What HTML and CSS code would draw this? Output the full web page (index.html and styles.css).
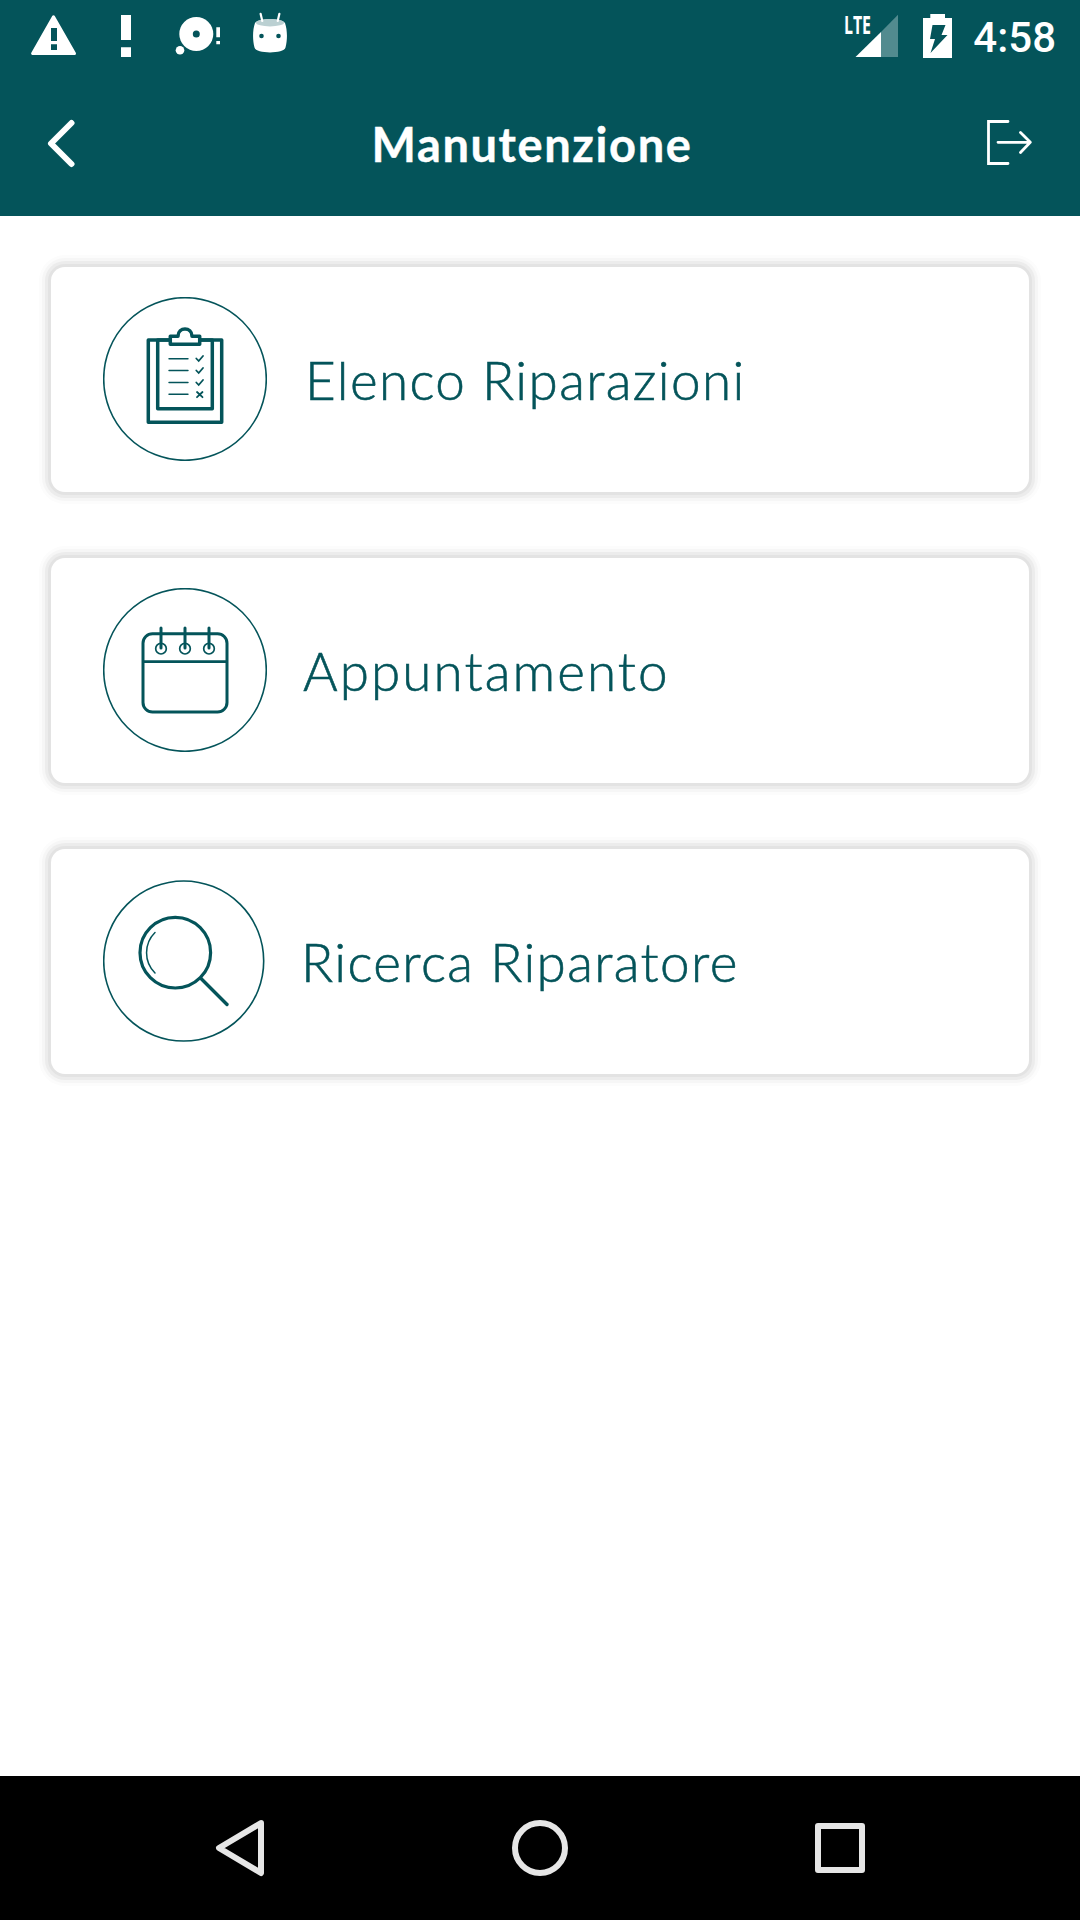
FILE: index.html
```html
<!DOCTYPE html>
<html lang="it">

<head>
    <meta charset="utf-8">
    <title>Manutenzione</title>
    <link rel="stylesheet" href="styles.css">
</head>

<body>
    <!-- Status bar -->
    <div class="status-bar">
        <div class="status-left">
            <svg width="72" height="72" viewBox="0 0 72 72">
                <path class="fill" stroke="#fff" stroke-width="3" stroke-linejoin="round" d="M35.5 16.8L14.6 53.4H56.5Z" />
                <path class="cut" d="M33 28h6v13h-6zM33 44.3h6v5.7h-6z" />
            </svg>
            <svg width="72" height="72" viewBox="0 0 72 72">
                <path class="fill" d="M31 15h10v25H31zM31 47.3h10V57H31z" />
            </svg>
            <svg width="72" height="72" viewBox="0 0 72 72">
                <circle class="fill" cx="34.3" cy="34" r="17" />
                <circle class="cut" cx="34.3" cy="34" r="3.5" />
                <circle class="fill" cx="18" cy="50.3" r="4.3" />
                <path class="fill" d="M54.3 27.3H58v10h-3.7zM54.3 41H58v3.3h-3.7z" />
            </svg>
            <svg width="72" height="72" viewBox="0 0 72 72">
                <path class="fill" d="M21 23C25 18 47 18 51 23C53.5 30 53.5 40 51.5 47.5C50 54 22 54 20.5 47.5C18.5 40 18.5 30 21 23Z" />
                <ellipse class="lid" cx="36" cy="22.7" rx="14" ry="3.7" />
                <path d="M26.6 13.8L28.3 21M45.4 13.8L43.7 21" stroke="#fff" stroke-width="2.2" stroke-linecap="round" />
                <circle class="cut" cx="27.5" cy="36" r="2.3" />
                <circle class="cut" cx="44.5" cy="36" r="2.3" />
            </svg>
        </div>
        <div class="status-right">
            <svg width="54" height="72" viewBox="0 0 54 72">
                <text class="lte" x="0" y="33.5" textLength="27" lengthAdjust="spacingAndGlyphs">LTE</text>
                <path class="dim" d="M37 32L54 14.7V57H37Z" />
                <path class="fill" d="M11.5 57L37 32V57Z" />
            </svg>
            <svg width="29" height="72" viewBox="0 0 29 72">
                <path class="fill" d="M7.3 14H22V18H29V58H0V18H7.3Z" />
                <path class="cut" d="M9.5 25H22.5L18.5 35H24.5L7.5 53L12 39H7Z" />
            </svg>
            <span class="clock">4:58</span>
        </div>
    </div>

    <!-- Title bar -->
    <div class="title-bar">
        <svg width="30" height="50" viewBox="0 0 30 50">
            <path d="M24.5 4L4 24.5L24.5 45" fill="none" stroke="#fff" stroke-width="6" stroke-linecap="round" stroke-linejoin="round" />
        </svg>
        <h1 class="title">Manutenzione</h1>
        <svg width="46" height="48" viewBox="0 0 46 48">
            <path d="M21 1.5H1.5V43.5H21" fill="none" stroke="#fff" stroke-width="2.8" stroke-linecap="round" />
            <path d="M11 22.3H43M33.5 12.5L43.3 22.3L33.5 32.5" fill="none" stroke="#fff" stroke-width="2.8" stroke-linecap="round" stroke-linejoin="round" />
        </svg>
    </div>

    <div class="menu">
        <div class="card">
            <svg class="icon" width="164" height="164" viewBox="0 0 164 164">
                <circle cx="82" cy="82" r="81.3" stroke-width="1.6" />
                <g stroke-width="3.5" stroke-linejoin="round">
                    <rect x="45.3" y="43" width="73.4" height="82.3" />
                    <rect x="54.7" y="43" width="54.6" height="68.7" />
                    <path fill="#fff" d="M67.3 39.3H75C75 29.6 89 29.6 89 39.3H96.7V47.3H67.3Z" />
                </g>
                <path stroke-width="1.4" stroke-linecap="round" d="M66 61.7H85M66 73.5H85M66 85.5H85M66 97.3H85" />
                <path stroke-width="1.8" stroke-linecap="round" d="M93.3 61.5L95.7 64L100 59M93.3 73.5L95.7 76L100 71M93.3 85.5L95.7 88L100 83M94 95L99.5 100.2M99.5 95L94 100.2" />
            </svg>
            <span class="label list">Elenco Riparazioni</span>
        </div>
        <div class="card">
            <svg class="icon" width="164" height="164" viewBox="0 0 164 164">
                <circle cx="82" cy="82" r="81.3" stroke-width="1.6" />
                <rect x="40" y="45.7" width="84" height="78.3" rx="9.5" stroke-width="3" />
                <path stroke-width="2.8" d="M40 73.7H124" />
                <g stroke-width="1.7">
                    <circle cx="58" cy="60.7" r="5.3" />
                    <circle cx="82" cy="60.7" r="5.3" />
                    <circle cx="106" cy="60.7" r="5.3" />
                </g>
                <path stroke-width="3" stroke-linecap="round" d="M58 40V60M82 40V60M106 40V60" />
            </svg>
            <span class="label appointment">Appuntamento</span>
        </div>
        <div class="card">
            <svg class="icon" width="162" height="162" viewBox="0 0 162 162">
                <circle cx="80.7" cy="81" r="80" stroke-width="1.6" />
                <circle cx="72.3" cy="72.7" r="35.3" stroke-width="3.2" />
                <path stroke-width="3.4" stroke-linecap="round" d="M98 98.5L124 124.5" />
                <path stroke-width="1.5" stroke-linecap="round" d="M52 52.5A28.5 28.5 0 0 0 52 93" />
            </svg>
            <span class="label">Ricerca Riparatore</span>
        </div>
    </div>

    <!-- Android navigation -->
    <div class="nav-bar">
        <svg width="60" height="60" viewBox="0 0 60 60">
            <path d="M51 5L9 30L51 55Z" />
        </svg>
        <svg width="60" height="60" viewBox="0 0 60 60">
            <circle cx="30" cy="30" r="25" />
        </svg>
        <svg width="60" height="60" viewBox="0 0 60 60">
            <rect x="8" y="8" width="44" height="44" />
        </svg>
    </div>
</body>

</html>
```
FILE: styles.css
```css
body {
    margin: 0;
    height: 1920px;
    display: flex;
    flex-direction: column;
    background-color: #fff;
    font-family: Lato, sans-serif;
}

svg {
    display: block;
    flex-shrink: 0;
}

.status-bar,
.title-bar {
    display: flex;
    justify-content: space-between;
    align-items: center;
    box-sizing: border-box;
    background-color: #04545a;
    color: #fff;
}

.status-bar {
    height: 72px;
    padding: 0 24px 0 18px;
}

.status-left,
.status-right {
    display: flex;
    align-items: center;
}

.status-right {
    gap: 25px;
}

.fill {
    fill: #fff;
}

.cut {
    fill: #04545a;
}

.lid {
    fill: #bbd0d2;
}

.dim {
    fill: #528b8f;
}

.lte {
    fill: #fff;
    font-family: "Open Sans", sans-serif;
    font-size: 25px;
    font-weight: 700;
}

.clock {
    margin-left: -4px;
    font-family: Roboto, sans-serif;
    font-size: 42px;
    font-weight: 500;
    line-height: 72px;
    padding-top: 3px;
}

.title-bar {
    height: 144px;
    padding: 0 47px;
}

.title {
    margin: 0;
    font-size: 47px;
    font-weight: 700;
    letter-spacing: 1.6px;
    -webkit-text-stroke: 0.4px #fff;
}

.menu {
    flex: 1;
    display: flex;
    flex-direction: column;
    gap: 66px;
    padding: 51px;
}

.card {
    display: flex;
    align-items: center;
    gap: 36px;
    height: 225px;
    padding-left: 52px;
    box-sizing: border-box;
    border-radius: 14px;
    background-color: #fff;
    box-shadow: 0 0 0 3px #e3e3e3, 0 0 0 6px #ececec, 0 0 0 9px #f6f6f6, 0 0 0 12px #fcfcfc;
}

.icon {
    margin-bottom: 2px;
    fill: none;
    stroke: #04545a;
}

.label {
    color: #04545a;
    font-size: 53px;
    font-weight: 300;
    letter-spacing: 1.4px;
    -webkit-text-stroke: 0.6px #04545a;
}

.list {
    padding-left: 2px;
}

.appointment {
    letter-spacing: 2.1px;
}

.nav-bar {
    display: flex;
    justify-content: center;
    align-items: center;
    gap: 240px;
    height: 144px;
    background-color: #000;
}

.nav-bar svg {
    fill: none;
    stroke: #e6e6e6;
    stroke-width: 6;
    stroke-linejoin: round;
}
```
